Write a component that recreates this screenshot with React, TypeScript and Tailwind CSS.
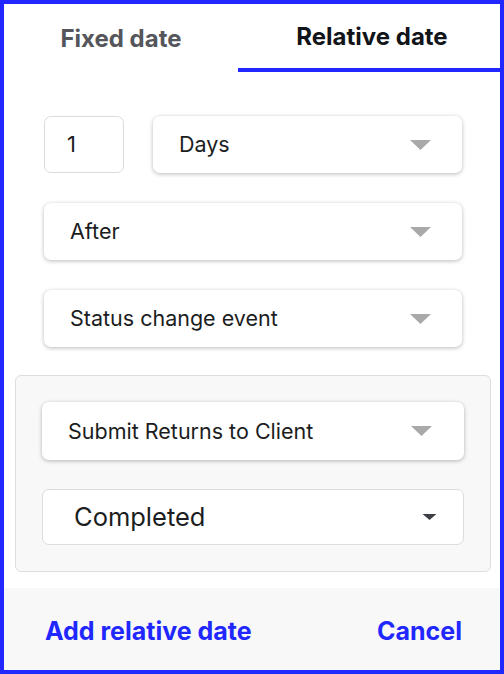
import React from "react";

const Caret = ({ dark }: { dark?: boolean }) =>
  dark ? (
    <svg width="15" height="8" viewBox="0 0 15 8" className="shrink-0">
      <path d="M0.5 1 L14.5 1 L7.5 7 Z" fill="#3f4045" />
    </svg>
  ) : (
    <svg width="21" height="10" viewBox="0 0 21 10" className="shrink-0">
      <path d="M0 0 L21 0 L10.5 10 Z" fill="#a9a9a9" />
    </svg>
  );

const Select = ({ label, className = "" }: { label: string; className?: string }) => (
  <div
    className={`flex h-[57px] items-center justify-between rounded-[7px] bg-white pl-[26px] pr-[31px] shadow-[0_1px_4px_rgba(0,0,0,0.28)] ${className}`}
  >
    <span className="text-[21.5px] text-[#1b1d21]">{label}</span>
    <Caret />
  </div>
);

export default function App() {
  return (
    <div
      className="flex h-[674px] w-[504px] flex-col border-4 border-[#2027ff] bg-white"
      style={{ fontFamily: "Inter, 'Noto Sans', sans-serif" }}
    >
      <div className="flex h-[68px] shrink-0">
        <div className="flex w-[234px] items-center justify-center pt-[1px] text-[24px] font-bold text-[#55565c]">
          Fixed date
        </div>
        <div className="flex flex-1 items-center justify-center border-b-4 border-[#2027ff] pt-[1px] pl-[6px] text-[24px] font-bold text-[#111419]">
          Relative date
        </div>
      </div>

      <div className="flex flex-col gap-[30px] pl-[40px] pr-[38px] pt-[44px]">
        <div className="flex gap-[29px]">
          <div className="flex h-[57px] w-[80px] items-center rounded-[7px] border border-[#dcdcdc] pl-[22px] text-[22px] text-[#1b1d21]">
            1
          </div>
          <Select label="Days" className="flex-1" />
        </div>
        <Select label="After" />
        <Select label="Status change event" />
      </div>

      <div className="ml-[11px] mr-[9px] mt-[28px] flex flex-col gap-[29px] rounded-[6px] border border-[#dedede] bg-[#f8f8f8] px-[26px] py-[26px]">
        <div className="flex h-[58px] items-center justify-between rounded-[7px] bg-white pl-[26px] pr-[32px] shadow-[0_1px_4px_rgba(0,0,0,0.28)]">
          <span className="text-[21.5px] text-[#1b1d21]">Submit Returns to Client</span>
          <Caret />
        </div>
        <div className="flex h-[56px] items-center justify-between rounded-[7px] border border-[#dcdcdc] bg-white pl-[31px] pr-[26px]">
          <span className="text-[25.5px] text-[#1b1d21]">Completed</span>
          <Caret dark />
        </div>
      </div>

      <div className="mt-auto flex h-[82px] shrink-0 items-center justify-between bg-[#f8f8f8] pl-[41px] pr-[38px] pt-[5px]">
        <span className="text-[25px] font-bold text-[#2027ff]">Add relative date</span>
        <span className="text-[25px] font-bold text-[#2027ff]">Cancel</span>
      </div>
    </div>
  );
}
